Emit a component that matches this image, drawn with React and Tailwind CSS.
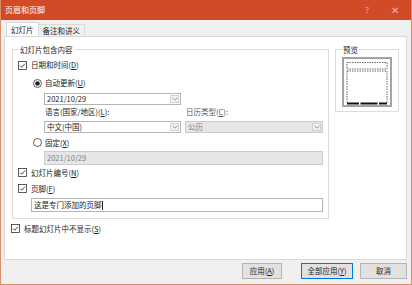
const Check = () => (
  <svg width="9" height="9" viewBox="0 0 9 9" className="shrink-0">
    <rect x="0.5" y="0.5" width="8" height="8" fill="#fff" stroke="#333" strokeWidth="0.8" />
    <path d="M2 4.6 L3.7 6.3 L7 2.6" fill="none" stroke="#333" strokeWidth="0.9" />
  </svg>
);

const Radio = ({ on }) => (
  <svg width="9" height="9" viewBox="0 0 9 9" className="shrink-0">
    <circle cx="4.5" cy="4.5" r="4" fill="#fff" stroke="#333" strokeWidth="0.8" />
    {on && <circle cx="4.5" cy="4.5" r="2.3" fill="#222" />}
  </svg>
);

const Chevron = () => (
  <svg width="6" height="4" viewBox="0 0 6 4">
    <path d="M0.5 0.8 L3 3.2 L5.5 0.8" fill="none" stroke="#777" strokeWidth="0.8" />
  </svg>
);

const Key = ({ k }) => (
  <span>
    (<span className="underline">{k}</span>)
  </span>
);

function Select({ value, disabled, className }) {
  return (
    <div
      className={`flex h-[12px] items-stretch border ${
        disabled ? 'border-[#cccccc] bg-[#e6e6e6] text-[#838383]' : 'border-[#b4b4b4] bg-white text-[#222]'
      } ${className}`}
    >
      <div className="flex flex-1 items-center pl-[2px]">{value}</div>
      <div className="my-[1px] mr-[1px] flex w-[9px] items-center justify-center border border-[#d0d0d0] bg-[#f3f3f3]">
        <Chevron />
      </div>
    </div>
  );
}

function Preview() {
  return (
    <svg width="50" height="50" viewBox="0 0 50 50">
      <rect x="1" y="1" width="48" height="48" fill="#fff" stroke="#a3a3a3" strokeWidth="2" />
      <rect x="5" y="5.5" width="40" height="6.5" fill="none" stroke="#444" strokeWidth="0.8" strokeDasharray="1.5 1" />
      <path d="M5 14 V46 M45 14 V46 M5 14 H45" fill="none" stroke="#444" strokeWidth="0.8" strokeDasharray="1.5 1" />
      <rect x="5" y="45.5" width="12" height="2" fill="#111" />
      <rect x="18.5" y="45.5" width="17" height="2" fill="#111" />
      <rect x="37" y="45.5" width="8" height="2" fill="#111" />
    </svg>
  );
}

export default function App() {
  return (
    <div className="flex h-[285px] w-[412px] flex-col border-x border-b border-[#dd8c6e] bg-[#f0f0f0] font-['Noto_Sans_CJK_SC',sans-serif] text-[7.5px] leading-none text-[#222]">
      {/* Title bar */}
      <div className="flex h-[20px] shrink-0 items-center justify-between bg-[#d24b26] pl-[4px] pr-[12px] text-[8px] text-white">
        <span>页眉和页脚</span>
        <div className="flex items-center gap-[22px] text-[#f3b9a7]">
          <span className="text-[8px]">?</span>
          <span className="text-[10px]">✕</span>
        </div>
      </div>

      {/* Tabs */}
      <div className="mt-[3px] flex h-[13px] items-end pl-[5px]">
        <div className="relative z-10 flex h-[14px] items-center border border-b-0 border-[#d9d9d9] bg-white px-[4px]">幻灯片</div>
        <div className="flex h-[12px] items-center border border-b-0 border-l-0 border-[#d9d9d9] bg-[#f0f0f0] px-[4px]">备注和讲义</div>
      </div>

      {/* Panel */}
      <div className="ml-[3px] flex h-[224px] w-[403px] flex-col border border-[#d9d9d9] bg-white px-[7px] pt-[9px]">
        <div className="flex items-start gap-[6px]">
          <fieldset className="h-[173px] w-[318px] border border-[#dcdcdc] pl-[5px] pr-[5px]">
            <legend className="ml-[1px] px-[1px]">幻灯片包含内容</legend>
            <div className="mt-[7px] flex items-center gap-[4px]">
              <Check />
              <span>
                日期和时间<Key k="D" />
              </span>
            </div>
            <div className="ml-[15px] mt-[9px] flex items-center gap-[3px]">
              <Radio on />
              <span>
                自动更新<Key k="U" />
              </span>
            </div>
            <Select value="2021/10/29" className="ml-[26px] mt-[5px] w-[137px]" />
            <div className="ml-[27px] mt-[3px] flex">
              <span className="w-[141px]">
                语言(国家/地区)<Key k="L" />:
              </span>
              <span className="text-[#555]">
                日历类型<Key k="C" />:
              </span>
            </div>
            <div className="ml-[26px] mt-[6px] flex gap-[4px]">
              <Select value="中文(中国)" className="w-[137px]" />
              <Select value="公历" disabled className="w-[138px]" />
            </div>
            <div className="ml-[15px] mt-[5px] flex items-center gap-[3px]">
              <Radio />
              <span>
                固定<Key k="X" />
              </span>
            </div>
            <div className="ml-[26px] mt-[4px] flex h-[14px] w-[279px] items-center border border-[#cccccc] bg-[#e6e6e6] pl-[2px] text-[#838383]">
              2021/10/29
            </div>
            <div className="mt-[3px] flex items-center gap-[4px]">
              <Check />
              <span>
                幻灯片编号<Key k="N" />
              </span>
            </div>
            <div className="mt-[7px] flex items-center gap-[4px]">
              <Check />
              <span>
                页脚<Key k="F" />
              </span>
            </div>
            <div className="ml-[13px] mt-[5px] flex h-[14px] w-[292px] items-center border border-[#b4b4b4] bg-white pl-[2px]">
              这是专门添加的页脚<span className="ml-[0.5px] h-[9px] w-[1px] bg-[#222]" />
            </div>
          </fieldset>

          <fieldset className="h-[66px] w-[66px] border border-[#dcdcdc] px-[6px]">
            <legend className="px-[1px]">预览</legend>
            <div className="mt-[3px]">
              <Preview />
            </div>
          </fieldset>
        </div>

        <div className="ml-[-1px] mt-[5px] flex items-center gap-[4px]">
          <Check />
          <span>
            标题幻灯片中不显示<Key k="S" />
          </span>
        </div>
      </div>

      {/* Buttons */}
      <div className="mt-[3px] flex justify-end pr-[4px]">
        <div className="flex h-[16px] w-[40px] items-center justify-center border border-[#b4b4b4] bg-[#e1e1e1]">
          应用<Key k="A" />
        </div>
        <div className="ml-[19px] flex h-[16px] w-[52px] items-center justify-center border border-[#0078d7] bg-[#e1e1e1]">
          全部应用<Key k="Y" />
        </div>
        <div className="ml-[7px] flex h-[16px] w-[47px] items-center justify-center border border-[#b4b4b4] bg-[#e1e1e1]">
          取消
        </div>
      </div>
    </div>
  );
}
